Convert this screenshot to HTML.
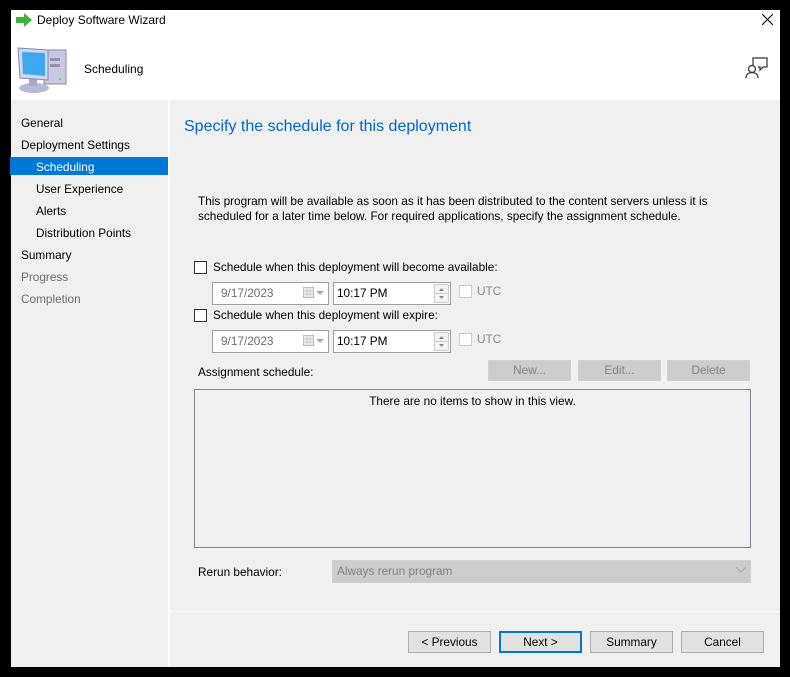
<!DOCTYPE html>
<html><head><meta charset="utf-8">
<style>
*{margin:0;padding:0;box-sizing:border-box}
body{width:790px;height:677px;background:#000;position:relative;overflow:hidden;font-family:"Liberation Sans",sans-serif;font-size:11.8px;color:#000}
.a{position:absolute}
.win{left:11px;top:10px;width:769px;height:657px;background:#fff}
.nav{left:11px;top:100px;width:157px;height:567px;background:#f0f0f0}
.main{left:170px;top:100px;width:610px;height:567px;background:#f0f0f0}
.n{position:absolute;left:10px;white-space:nowrap}
.sub{left:25px}
.gray{color:#6d6d6d}
.cb{width:13px;height:13px;border:1px solid #333;background:#fff}
.cbd{width:13px;height:13px;border:1px solid #ccc;background:#fff}
.fld{height:23px;border:1px solid #a0a0a0;background:#fff;line-height:21px;padding-left:3px}
.btn{height:22px;border:1px solid #adadad;background:#e1e1e1;text-align:center;line-height:20px}
.dbtn{height:21px;border:1px solid #d0d0d0;background:#cccccc;color:#838383;text-align:center;line-height:19px}
.spin{width:15px;height:19px;border:1px solid #ccc;background:#f4f4f4}
</style></head><body>
<div class="a win"></div>
<svg class="a" style="left:15px;top:13px" width="18" height="14" viewBox="0 0 18 14"><path d="M1 4h8V0l8 7-8 7v-4H1z" fill="#3cb43c"/></svg>
<div class="a" style="left:37px;top:13px;font-size:12px">Deploy Software Wizard</div>
<svg class="a" style="left:762px;top:14px" width="11" height="11" viewBox="0 0 11 11"><path d="M0 0L11 11M11 0L0 11" stroke="#000" stroke-width="1.1"/></svg>
<svg class="a" style="left:16px;top:44px" width="54" height="50" viewBox="0 0 54 50">
<rect x="28" y="6" width="22" height="34" fill="#c8c8e0" stroke="#8a8aaa"/>
<rect x="34" y="14" width="10" height="3" fill="#9090b0"/><rect x="34" y="20" width="10" height="3" fill="#9090b0"/>
<circle cx="44" cy="35" r="1" fill="#5c5"/>
<ellipse cx="18" cy="44" rx="15" ry="5" fill="#b8b8d8"/>
<rect x="13" y="34" width="8" height="8" fill="#a8a8c8"/>
<path d="M2 4L32 6V36L4 34Z" fill="#d0d8f0" stroke="#8888aa"/>
<path d="M6 8L29 9V32L7 30Z" fill="#3ca8f0"/>
</svg>
<div class="a" style="left:84px;top:62px;font-size:12px">Scheduling</div>
<svg class="a" style="left:745px;top:56px" width="24" height="24" viewBox="0 0 24 24" fill="none" stroke="#333" stroke-width="1.2"><path d="M8 9V2h14v9h-4l-3 3v-3h-2"/><circle cx="7" cy="13" r="3.5"/><path d="M1 22c0-4 3-5.5 6-5.5s6 1.5 6 5.5"/></svg>
<div class="a nav"></div>
<div class="a" style="left:168px;top:100px;width:2px;height:567px;background:#fff"></div>
<div class="a main"></div>
<div class="a" style="left:10px;top:157px;width:158px;height:18px;background:#0078d7"></div>
<div class="a" style="left:11px;top:0;width:157px">
<div class="n" style="top:116px">General</div>
<div class="n" style="top:138px">Deployment Settings</div>
<div class="n sub" style="top:160px;color:#fff">Scheduling</div>
<div class="n sub" style="top:182px">User Experience</div>
<div class="n sub" style="top:204px">Alerts</div>
<div class="n sub" style="top:226px">Distribution Points</div>
<div class="n" style="top:248px">Summary</div>
<div class="n gray" style="top:270px">Progress</div>
<div class="n gray" style="top:292px">Completion</div>
</div>
<div class="a" style="left:184px;top:118px;font-size:16px;color:#0066cc">Specify the schedule for this deployment</div>
<div class="a" style="left:198px;top:194px;width:540px;line-height:15px">This program will be available as soon as it has been distributed to the content servers unless it is scheduled for a later time below. For required applications, specify the assignment schedule.</div>
<div class="a cb" style="left:194px;top:261px"></div>
<div class="a" style="left:213px;top:260px">Schedule when this deployment will become available:</div>
<div class="a fld" style="left:212px;top:282px;width:117px;color:#6d6d6d;padding-left:8px">9/17/2023</div>
<svg class="a" style="left:303px;top:287px" width="22" height="12" viewBox="0 0 22 12"><rect x="0.5" y="0.5" width="10" height="10" fill="#eee" stroke="#bbb"/><path d="M0 4h11M0 7h11M4 0v11M7 0v11" stroke="#ccc"/><path d="M13 4h8l-4 4z" fill="#aaa"/></svg>
<div class="a fld" style="left:333px;top:282px;width:118px">10:17 PM</div>
<div class="a spin" style="left:434px;top:284px"></div>
<svg class="a" style="left:435px;top:285px" width="13" height="17" viewBox="0 0 13 17"><path d="M4 6l2.5-3 2.5 3z M4 11l2.5 3 2.5-3z" fill="#888"/><path d="M0 8.5h13" stroke="#ccc"/></svg>
<div class="a cbd" style="left:459px;top:285px"></div>
<div class="a" style="left:477px;top:284px;color:#8a8a8a">UTC</div>
<div class="a cb" style="left:194px;top:309px"></div>
<div class="a" style="left:213px;top:308px">Schedule when this deployment will expire:</div>
<div class="a fld" style="left:212px;top:330px;width:117px;color:#6d6d6d;padding-left:8px">9/17/2023</div>
<svg class="a" style="left:303px;top:335px" width="22" height="12" viewBox="0 0 22 12"><rect x="0.5" y="0.5" width="10" height="10" fill="#eee" stroke="#bbb"/><path d="M0 4h11M0 7h11M4 0v11M7 0v11" stroke="#ccc"/><path d="M13 4h8l-4 4z" fill="#aaa"/></svg>
<div class="a fld" style="left:333px;top:330px;width:118px">10:17 PM</div>
<div class="a spin" style="left:434px;top:332px"></div>
<svg class="a" style="left:435px;top:333px" width="13" height="17" viewBox="0 0 13 17"><path d="M4 6l2.5-3 2.5 3z M4 11l2.5 3 2.5-3z" fill="#888"/><path d="M0 8.5h13" stroke="#ccc"/></svg>
<div class="a cbd" style="left:459px;top:333px"></div>
<div class="a" style="left:477px;top:332px;color:#8a8a8a">UTC</div>
<div class="a" style="left:198px;top:365px">Assignment schedule:</div>
<div class="a dbtn" style="left:488px;top:360px;width:83px">New...</div>
<div class="a dbtn" style="left:578px;top:360px;width:83px">Edit...</div>
<div class="a dbtn" style="left:667px;top:360px;width:83px">Delete</div>
<div class="a" style="left:194px;top:389px;width:557px;height:159px;border:1px solid #828790;background:#f0f0f0;text-align:center;padding-top:4px">There are no items to show in this view.</div>
<div class="a" style="left:198px;top:565px">Rerun behavior:</div>
<div class="a" style="left:332px;top:560px;width:419px;height:23px;border:1px solid #d0d0d0;background:#cccccc;color:#838383;line-height:21px;padding-left:4px">Always rerun program</div>
<svg class="a" style="left:736px;top:567px" width="10" height="6" viewBox="0 0 10 6"><path d="M0 0L5 5L10 0" fill="none" stroke="#aaa"/></svg>
<div class="a" style="left:170px;top:611px;width:610px;height:1px;background:#fff"></div>
<div class="a btn" style="left:408px;top:631px;width:83px">&lt; Previous</div>
<div class="a btn" style="left:499px;top:631px;width:83px;border:2px solid #0078d7;line-height:18px">Next &gt;</div>
<div class="a btn" style="left:590px;top:631px;width:83px">Summary</div>
<div class="a btn" style="left:681px;top:631px;width:83px">Cancel</div>
</body></html>
